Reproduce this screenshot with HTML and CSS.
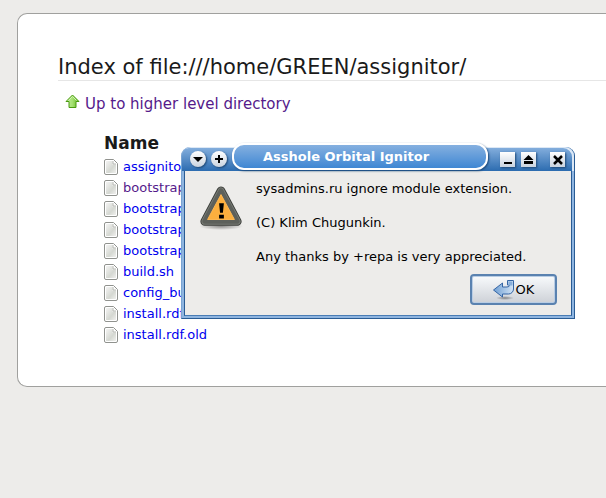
FILE: index.html
```html
<!DOCTYPE html>
<html lang="en">
<head>
  <meta charset="utf-8">
  <title>Index of file:///home/GREEN/assignitor/</title>
  <link rel="stylesheet" href="styles.css">
</head>
<body>
  <svg class="defs" width="0" height="0" aria-hidden="true">
    <defs>
      <linearGradient id="paper" x1="0" y1="0" x2="1" y2="1">
        <stop offset="0" stop-color="#f4f4f3"/>
        <stop offset="0.6" stop-color="#d5d8d2"/>
        <stop offset="1" stop-color="#f0f0ee"/>
      </linearGradient>
      <linearGradient id="leaf" x1="0" y1="0" x2="1" y2="0">
        <stop offset="0" stop-color="#c0ee9c"/>
        <stop offset="0.5" stop-color="#a4e070"/>
        <stop offset="1" stop-color="#5fb81f"/>
      </linearGradient>
      <linearGradient id="enter" x1="0" y1="0" x2="1" y2="0">
        <stop offset="0" stop-color="#6f9fd4"/>
        <stop offset="1" stop-color="#d3e4f5"/>
      </linearGradient>
      <radialGradient id="shade">
        <stop offset="0" stop-color="#000" stop-opacity="0.4"/>
        <stop offset="1" stop-color="#000" stop-opacity="0"/>
      </radialGradient>
    </defs>
    <symbol id="file" viewBox="0 0 14 16">
      <path d="M2 .5h7.500l4 4V14a1.500 1.500 0 0 1-1.500 1.500H2A1.500 1.500 0 0 1 .5 14V2A1.500 1.500 0 0 1 2 .5z" fill="#fff" stroke="#90928e"/>
      <path d="M2 2h6.500v3.500H12V14H2z" fill="url(#paper)"/>
      <path d="M9 2v3h3" fill="#fff" stroke="#b4b6b1"/>
    </symbol>
  </svg>

  <main class="listing">
    <h1>Index of file:///home/GREEN/assignitor/</h1>
    <p class="up">
      <a href="file:///home/GREEN/">
        <svg width="15" height="15" viewBox="0 0 15 15" aria-hidden="true">
          <path d="M7.500 1 14 7.500h-3v6h-7v-6H1z" fill="url(#leaf)" stroke="#4a9a10" stroke-linejoin="round"/>
          <path d="M3.500 6.500l4-4 4 4" fill="none" stroke="#d0f3b2"/>
        </svg>
        Up to higher level directory</a>
    </p>
    <table class="files">
      <thead>
        <tr><th>Name</th></tr>
      </thead>
      <tbody>
        <tr><td><a href="assignitor.xpi"><svg width="14" height="16" aria-hidden="true"><use href="#file"/></svg>assignitor</a></td></tr>
        <tr><td><a class="visited" href="bootstrap.js"><svg width="14" height="16" aria-hidden="true"><use href="#file"/></svg>bootstrap</a></td></tr>
        <tr><td><a href="bootstrap.js"><svg width="14" height="16" aria-hidden="true"><use href="#file"/></svg>bootstrap</a></td></tr>
        <tr><td><a href="bootstrap.js"><svg width="14" height="16" aria-hidden="true"><use href="#file"/></svg>bootstrap</a></td></tr>
        <tr><td><a href="bootstrap.js"><svg width="14" height="16" aria-hidden="true"><use href="#file"/></svg>bootstrap</a></td></tr>
        <tr><td><a href="build.sh"><svg width="14" height="16" aria-hidden="true"><use href="#file"/></svg>build.sh</a></td></tr>
        <tr><td><a href="config_build.sh"><svg width="14" height="16" aria-hidden="true"><use href="#file"/></svg>config_build</a></td></tr>
        <tr><td><a href="install.rdf"><svg width="14" height="16" aria-hidden="true"><use href="#file"/></svg>install.rdf</a></td></tr>
        <tr><td><a href="install.rdf.old"><svg width="14" height="16" aria-hidden="true"><use href="#file"/></svg>install.rdf.old</a></td></tr>
      </tbody>
    </table>
  </main>

  <div class="dialog" role="alertdialog" aria-labelledby="dialog-title">
    <header class="titlebar">
      <button class="round" aria-label="Window menu">
        <svg width="16" height="16" viewBox="0 0 16 16"><path d="M3 6h10L8 11z"/></svg>
      </button>
      <button class="round" aria-label="Stick">
        <svg width="16" height="16" viewBox="0 0 16 16"><path d="M7 4h2v3h3v2H9v3H7V9H4V7h3z"/></svg>
      </button>
      <h2 id="dialog-title" class="tab">Asshole Orbital Ignitor</h2>
      <button class="square" aria-label="Minimize">
        <svg width="15" height="15" viewBox="0 0 15 15"><path d="M4 10h8v2H4z"/></svg>
      </button>
      <button class="square" aria-label="Maximize">
        <svg width="15" height="15" viewBox="0 0 15 15"><path d="M7.500 3l5 5h-10zM3 9h9v3H3z"/></svg>
      </button>
      <button class="square close" aria-label="Close">
        <svg width="15" height="15" viewBox="0 0 15 15"><path d="M4 4l8 8M12 4l-8 8" stroke="#000" stroke-width="2.500"/></svg>
      </button>
    </header>
    <div class="content">
      <svg class="warning" width="46" height="46" viewBox="0 0 48 48" aria-hidden="true">
        <ellipse cx="24" cy="43" rx="23" ry="4" fill="url(#shade)"/>
        <path d="M24 6 41 38H7z" fill="#555753" stroke="#3b3d39" stroke-width="9" stroke-linejoin="round"/>
        <path d="M24 6 41 38H7z" fill="#5d605b" stroke="#777a74" stroke-width="7" stroke-linejoin="round"/>
        <path d="M24 6 41 38H7z" fill="#5d605b" stroke="#5d605b" stroke-width="5" stroke-linejoin="round"/>
        <path d="M24 10 38 36H10z" fill="#fcaf3e" stroke="#ffb851" stroke-linejoin="round"/>
        <path d="M22 19h5l-1 10h-3zM22 31h5v4h-5z" fill="#000"/>
      </svg>
      <div class="message">
        <p>sysadmins.ru ignore module extension.</p>
        <p>(C) Klim Chugunkin.</p>
        <p>Any thanks by +repa is very appreciated.</p>
      </div>
    </div>
    <footer class="actions">
      <button class="ok">
        <svg width="22" height="20" viewBox="0 0 22 20" aria-hidden="true">
          <ellipse cx="12" cy="18" rx="9" ry="2" fill="url(#shade)"/>
          <path d="M14.500 .5h6V9a5 5 0 0 1-5 5H9.500v3L.5 10l9-7v4h4.500q2.500 0 2.500-2h-2z" fill="url(#enter)" stroke="#3465a4" stroke-linejoin="round"/>
          <path d="M15.500 1.500h4v4h-4z" fill="#87aedb"/>
        </svg>OK</button>
    </footer>
  </div>
</body>
</html>
```

FILE: styles.css
```css
body {
  margin: 0;
  padding: 13px 0 13px 17px;
  background-color: #edecea;
  color: #1a1a1a;
  font-family: "DejaVu Sans", sans-serif;
}

.defs {
  position: absolute;
}

a {
  color: #0000ee;
  text-decoration: none;
}

.listing {
  padding: 40px 0 41px 40px;
  background-color: white;
  border: 1px solid #a0a09e;
  border-right: none;
  border-radius: 10px 0 0 10px;
}

h1 {
  margin: 0;
  font-size: 21px;
  font-weight: normal;
  line-height: 26px;
  border-bottom: 1px solid #e6e6e6;
}

.up {
  margin: 12px 0 0 7px;
  font-size: 15px;
  line-height: 22px;
}

.up a {
  display: flex;
  gap: 5px;
  color: #551a8b;
}

.up svg {
  margin-top: 1px;
}

.files {
  margin: 18px 0 0 46px;
  border-collapse: collapse;
  font-size: 13px;
}

.files th {
  padding: 0 0 3px;
  text-align: left;
  font-size: 17px;
  line-height: 20px;
}

.files td {
  padding: 0;
  line-height: 21px;
}

.files a {
  display: flex;
  align-items: center;
  gap: 5px;
}

.files .visited {
  color: #551a8b;
}

/* window on top of the listing */
.dialog {
  position: absolute;
  left: 181px;
  top: 147px;
  width: 394px;
  box-sizing: border-box;
  padding: 0 2px 2px;
  background-color: #8fb5e0;
  border: 1px solid #2a5c94;
  border-top: none;
  border-left-color: #79a3d2;
  border-radius: 9px 9px 0 0;
  color: black;
}

.titlebar {
  display: flex;
  align-items: center;
  height: 24px;
  margin: 0 -2px;
  padding: 0 9px 0 8px;
  background-image: linear-gradient(#86b0de, #2c6cb0);
  border-radius: 9px 9px 0 0;
  box-sizing: border-box;
  box-shadow: inset -2px 1px 0 #dce8f5;
}

.titlebar button {
  flex: none;
  padding: 0;
  border: none;
  background-image: linear-gradient(#fff, #c9d3df);
  box-shadow: 1px 1px 2px #1d4877;
}

.titlebar svg {
  display: block;
}

.round {
  border-radius: 50%;
  margin-right: 5px;
}

.square {
  margin-left: 6px;
}

.close {
  margin-left: 14px;
}

.tab {
  flex: 1;
  align-self: flex-end;
  box-sizing: border-box;
  height: 27px;
  margin: 0 6px 1px 0;
  padding-left: 29px;
  color: white;
  font-size: 13px;
  line-height: 23px;
  border: 2px solid white;
  border-radius: 12px;
  background-image: linear-gradient(#85b0e0, #3f87d3);
  box-shadow: 1px 1px 2px #1d4877;
}

.content {
  display: flex;
  gap: 12px;
  padding: 9px 13px 0;
  background-color: #edecea;
  border: solid #2a5c94;
  border-width: 0 1px;
}

.warning {
  flex: none;
  margin-top: 5px;
}

.message {
  font-size: 13px;
  line-height: 17px;
}

.message p {
  margin: 0 0 17px;
}

.actions {
  display: flex;
  justify-content: flex-end;
  padding: 0 14px 10px;
  margin-top: -8px;
  border: 1px solid #2a5c94;
  border-bottom-color: #4a7db5;
  border-top: none;
  background-color: #edecea;
}

.ok {
  display: flex;
  align-items: center;
  justify-content: center;
  gap: 1px;
  width: 87px;
  height: 31px;
  padding: 0;
  color: black;
  font-size: 13px;
  font-family: inherit;
  background-image: linear-gradient(#f8fafc, #cdd1d7);
  border: 2px solid #5a82b0;
  border-radius: 4px;
  box-shadow: inset 0 0 0 1px #b9cde4;
}
```
